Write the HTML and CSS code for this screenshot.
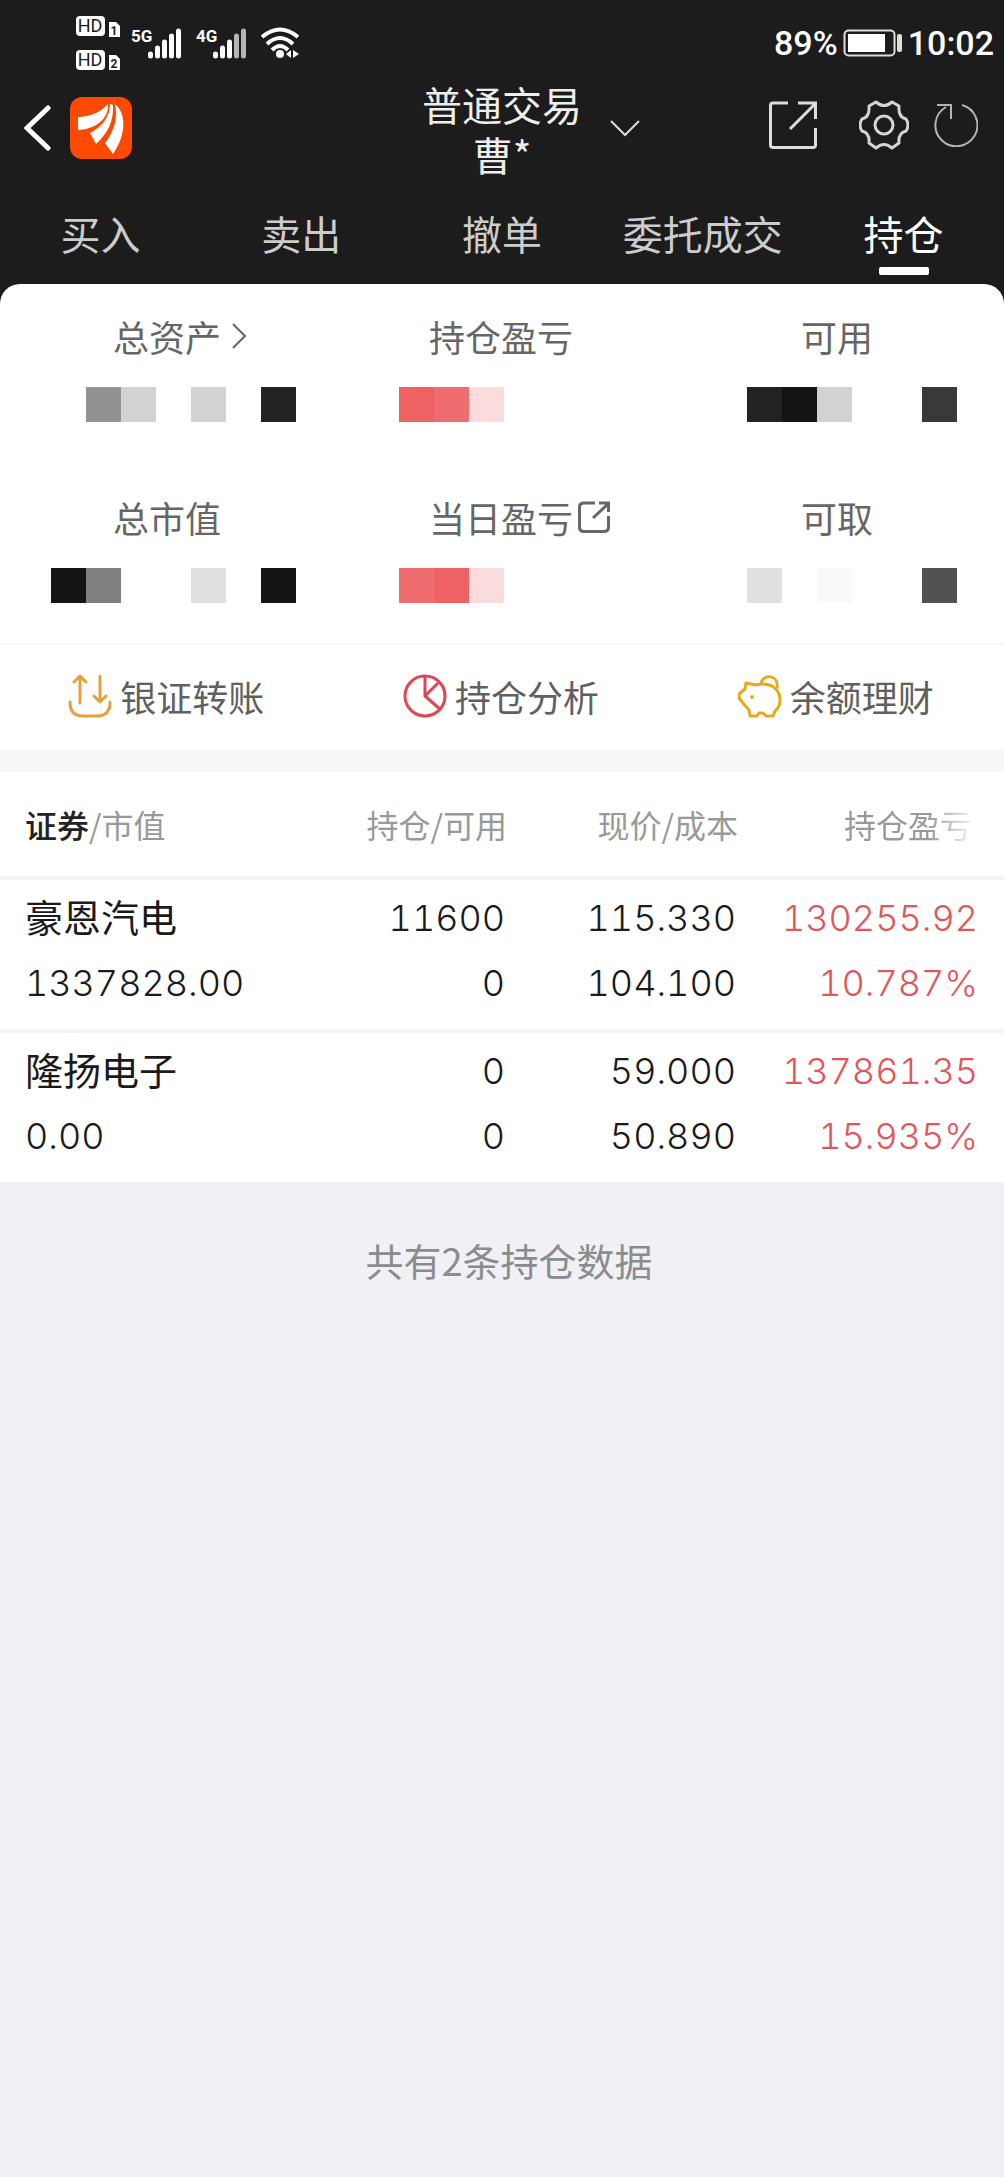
FILE: index.html
```html
<!DOCTYPE html>
<html lang="zh-CN">
<head>
    <meta charset="UTF-8">
    <meta name="viewport" content="width=device-width, initial-scale=1.0">
    <title>普通交易 - 持仓</title>
    <link rel="stylesheet" href="styles.css">
</head>
<body>
    <header class="top">
        <div class="status-bar">
            <div class="status-left">
                <svg class="hd" width="46" height="54" viewBox="0 0 46 54">
                    <rect x="1" y="0" width="29" height="20" rx="4" fill="#fff"/>
                    <text x="15" y="16" class="hd-text">HD</text>
                    <path d="M34 6h7l4 4v11H34z" fill="#fff"/>
                    <text x="39" y="19" class="sim-text">1</text>
                    <rect x="1" y="34" width="29" height="20" rx="4" fill="#fff"/>
                    <text x="15" y="50" class="hd-text">HD</text>
                    <path d="M34 39h7l4 4v11H34z" fill="#fff"/>
                    <text x="39" y="52" class="sim-text">2</text>
                </svg>
                <svg width="51" height="36" viewBox="0 -2 51 36">
                    <text x="0" y="15" class="net-text">5G</text>
                    <path d="M19.500 29v-2M26.500 29V21M33.500 29V15M40.500 29V9M47.500 29V4" stroke="#fff" stroke-width="5" stroke-linecap="round"/>
                </svg>
                <svg width="51" height="36" viewBox="0 -2 51 36">
                    <text x="0" y="15" class="net-text">4G</text>
                    <path d="M19.500 29v-2M26.500 29V21M33.500 29V15" stroke="#fff" stroke-width="5" stroke-linecap="round"/>
                    <path d="M40.500 29V9M47.500 29V4" stroke="#b5b5b5" stroke-width="5" stroke-linecap="round"/>
                </svg>
                <svg width="38" height="32" viewBox="0 0 38 32">
                    <g fill="none" stroke="#fff" stroke-width="4">
                        <path d="M1 10Q19-5 37 10"/>
                        <path d="M6 17Q19 5 32 17"/>
                        <path d="M11 23Q19 15 27 23"/>
                    </g>
                    <circle cx="19" cy="27" r="4" fill="#fff"/>
                    <path d="M30 23v8l-5-4zM32 23l6 4-6 4z" fill="#fff"/>
                </svg>
            </div>
            <div class="status-right">
                <span>89%</span>
                <svg width="60" height="28" viewBox="0 0 60 28">
                    <rect x="1.500" y="1.500" width="50" height="25" rx="4" fill="none" stroke="#ddd" stroke-width="2"/>
                    <rect x="5" y="5" width="37" height="18" fill="#fff"/>
                    <rect x="54" y="5" width="5" height="18" rx="2" fill="#ddd"/>
                </svg>
                <span>10:02</span>
            </div>
        </div>

        <div class="app-bar">
            <div class="app-left">
                <button class="icon-btn" type="button" aria-label="返回">
                    <svg width="27" height="46" viewBox="0 0 27 46"><path d="M24 3L3 23l21 20" fill="none" stroke="#fff" stroke-width="5" stroke-linecap="round"/></svg>
                </button>
                <svg width="62" height="62" viewBox="0 0 62 62">
                    <rect width="62" height="62" rx="12" fill="#fc4a03"/>
                    <path d="M8 20C20 20 31 15 38 7C39 20 28 32 8 33z" fill="#fff"/>
                    <path d="M40 7l3 1C44 25 37 37 26 47L20 36C33 29 40 19 40 7z" fill="#fff"/>
                    <path d="M45 7C56 16 57 37 43 57L35 46C44 35 48 21 45 7z" fill="#fff"/>
                </svg>
            </div>
            <button class="account" type="button">
                <span class="account-name">普通交易<br>曹*</span>
                <svg width="30" height="18" viewBox="0 0 30 18"><path d="M1 1l14 14L29 1" fill="none" stroke="#ddd" stroke-width="2"/></svg>
            </button>
            <div class="app-right">
                <button class="icon-btn share" type="button" aria-label="分享">
                    <svg width="48" height="48" viewBox="0 0 48 48"><path d="M19 2H4Q1.500 2 1.500 4.500V44Q1.500 46.500 4 46.500H44Q46.500 46.500 46.500 44V27M29 2H46.500V18M46 3L21 28" fill="none" stroke="#ddd" stroke-width="3"/></svg>
                </button>
                <button class="icon-btn" type="button" aria-label="设置">
                    <svg width="50" height="50" viewBox="0 0 50 50">
                        <g fill="none" stroke="#d4d4d4" stroke-width="3">
                            <path d="M17 2Q25 9 33 2L40 6Q39 17 47 19Q51 25 47 31Q39 33 40 43L33 48Q25 41 17 48L10 43Q11 33 3 31Q-1 25 3 19Q11 17 10 6Z" stroke-linejoin="round"/>
                            <circle cx="25" cy="25" r="9"/>
                        </g>
                    </svg>
                </button>
                <button class="icon-btn" type="button" aria-label="刷新">
                    <svg width="44" height="44" viewBox="0 0 44 44"><path d="M28 2A21 21 0 1 1 12 4M3 2H17V16" fill="none" stroke="#b4b4b4" stroke-width="2"/></svg>
                </button>
            </div>
        </div>

        <nav class="tabs">
            <a href="#buy">买入</a>
            <a href="#sell">卖出</a>
            <a href="#cancel">撤单</a>
            <a href="#orders">委托成交</a>
            <a href="#holdings" class="active" aria-current="page">持仓</a>
        </nav>
    </header>

    <main>
        <div class="sheet-wrap">
            <section class="summary">
                <div class="item">
                    <a href="#assets" class="item-label">总资产<svg width="16" height="26" viewBox="0 0 16 26"><path d="M2 1l12 12L2 25" fill="none" stroke="#666" stroke-width="2"/></svg></a>
                    <div class="mosaic"><i></i><i class="g5"></i><i class="g7"></i><i></i><i class="g7"></i><i></i><i class="g1"></i></div>
                </div>
                <div class="item mid">
                    <span class="item-label">持仓盈亏</span>
                    <div class="mosaic"><i class="r1"></i><i class="r2"></i><i class="r3"></i></div>
                </div>
                <div class="item last">
                    <span class="item-label">可用</span>
                    <div class="mosaic"><i class="g1"></i><i class="g0"></i><i class="g7"></i><i></i><i></i><i class="g2"></i></div>
                </div>
                <div class="item">
                    <span class="item-label">总市值</span>
                    <div class="mosaic"><i class="g0"></i><i class="g4"></i><i></i><i></i><i class="g8"></i><i></i><i class="g0"></i></div>
                </div>
                <div class="item mid">
                    <a href="#today" class="item-label today">当日盈亏<svg width="32" height="32" viewBox="0 0 32 32"><path d="M17 2H6Q1.500 2 1.500 6V26Q1.500 30.500 6 30.500H26Q30.500 30.500 30.500 26V15M21 2H30.500V11M30 3L15 17" fill="none" stroke="#666" stroke-width="3"/></svg></a>
                    <div class="mosaic"><i class="r2"></i><i class="r1"></i><i class="r3"></i></div>
                </div>
                <div class="item last">
                    <span class="item-label">可取</span>
                    <div class="mosaic"><i class="g8"></i><i></i><i class="g9"></i><i></i><i></i><i class="g3"></i></div>
                </div>
            </section>
        </div>

        <div class="actions">
            <button type="button">
                <svg width="44" height="44" viewBox="0 0 44 44"><g fill="none" stroke="#e5a03c" stroke-width="3" stroke-linecap="round" stroke-linejoin="round"><path d="M12 29V3M6 8l6-6 6 6M32 2v26M26 22l6 6 6-6"/><path d="M2 28Q2 42 15 42H29Q42 42 42 28"/></g></svg>
                银证转账
            </button>
            <button type="button">
                <svg width="44" height="44" viewBox="0 0 44 44"><g fill="none" stroke="#dd4652" stroke-width="3"><circle cx="22" cy="22" r="20"/><path d="M22 2V22L38 36M22 22L35 9"/></g></svg>
                持仓分析
            </button>
            <button type="button">
                <svg width="44" height="44" viewBox="0 0 44 44"><g fill="none" stroke="#e6a91c" stroke-width="3" stroke-linejoin="round"><path d="M8 9L18 11C32 7 42 15 42 26Q42 33 37 37L35 42H28L25 39H21L19 42H12L11 36L5 29L1 24V20L7 15Z"/><path d="M23 9C26-1 41 1 39 14"/></g><circle cx="14" cy="23" r="2" fill="#e6a91c"/></svg>
                余额理财
            </button>
        </div>

        <table class="holdings">
            <thead>
                <tr>
                    <th class="c1"><b>证券</b>/市值</th>
                    <th class="c2">持仓/可用</th>
                    <th class="c3">现价/成本</th>
                    <th class="c4"><span class="fade">持仓盈亏</span></th>
                </tr>
            </thead>
            <tbody>
                <tr>
                    <td><span class="name">豪恩汽电</span>1337828.00</td>
                    <td>11600<br>0</td>
                    <td>115.330<br>104.100</td>
                    <td class="up">130255.92<br>10.787%</td>
                </tr>
                <tr>
                    <td><span class="name">隆扬电子</span>0.00</td>
                    <td>0<br>0</td>
                    <td>59.000<br>50.890</td>
                    <td class="up">137861.35<br>15.935%</td>
                </tr>
            </tbody>
        </table>

        <p class="total">共有2条持仓数据</p>
    </main>
</body>
</html>
```
FILE: styles.css
```css
* {
    box-sizing: border-box;
}
body {
    font-family: "Noto Sans CJK SC", sans-serif;
    background-color: #f0f0f5;
    color: #1a1a1a;
    margin: 0;
}
a {
    color: inherit;
    text-decoration: none;
}
button {
    padding: 0;
    border: none;
    background: none;
    font-family: inherit;
    color: inherit;
    cursor: pointer;
}
svg {
    display: block;
    flex: none;
}
.top {
    background-color: #1c1c1c;
    color: #fff;
}

/* status bar */
.status-bar {
    display: flex;
    justify-content: space-between;
    align-items: center;
    height: 79px;
    padding: 7px 10px 0 75px;
}
.status-left {
    display: flex;
    align-items: center;
    gap: 14px;
}
.hd {
    margin-right: -4px;
}
.hd-text {
    font: 400 18px Roboto, sans-serif;
    fill: #1c1c1c;
    text-anchor: middle;
}
.sim-text {
    font: 700 12px Roboto, sans-serif;
    fill: #1c1c1c;
    text-anchor: middle;
}
.net-text {
    font: 700 17px "Liberation Sans Narrow", Roboto, sans-serif;
    fill: #fff;
}
.status-right {
    display: flex;
    align-items: center;
    gap: 5px;
    font-family: Roboto, sans-serif;
    font-size: 34px;
    font-weight: 500;
    line-height: 40px;
}

/* app bar */
.app-bar {
    display: grid;
    grid-template-columns: 1fr auto 1fr;
    align-items: start;
    padding-bottom: 3px;
}
.app-left,
.app-right {
    display: flex;
    align-items: center;
}
.app-left {
    gap: 19px;
    padding: 18px 0 0 24px;
}
.app-right {
    justify-content: flex-end;
    gap: 25px;
    padding: 21px 26px 0 0;
}
.share {
    margin-right: 17px;
}
.account {
    display: grid;
    grid-template-columns: 30px auto 30px;
    align-items: center;
    gap: 28px;
}
.account-name {
    grid-column: 2;
    font-size: 40px;
    line-height: 50px;
    color: #eee;
}

/* tabs */
.tabs {
    display: grid;
    grid-template-columns: repeat(5, 1fr);
}
.tabs a {
    padding: 21px 0 9px;
    font-size: 40px;
    line-height: 60px;
    text-align: center;
    color: #ccc;
}
.tabs a::after {
    content: "";
    display: block;
    width: 50px;
    height: 8px;
    margin: 4px auto 0;
    border-radius: 2px;
}
.tabs .active {
    color: #fff;
}
.tabs .active::after {
    background-color: #fff;
}

/* account summary */
.sheet-wrap {
    background-color: #1c1c1c;
}
.summary {
    display: grid;
    grid-template-columns: 348fr 348fr 257fr;
    row-gap: 70px;
    padding: 27px 0 40px 51px;
    border-bottom: 2px solid #f7f7f8;
    border-radius: 20px 20px 0 0;
    background-color: #fff;
}
.item-label {
    display: flex;
    align-items: center;
    gap: 10px;
    margin-bottom: 26px;
    padding-left: 62px;
    font-size: 36px;
    line-height: 50px;
    color: #666;
}
.mid .item-label {
    padding-left: 30px;
}
.last .item-label {
    padding-left: 54px;
}
.mid .today {
    gap: 5px;
}
/* hidden amounts */
.mosaic {
    display: flex;
}
.mosaic i {
    width: 35px;
    height: 35px;
}
.g0 { background-color: #141414; }
.g1 { background-color: #232323; }
.g2 { background-color: #393939; }
.g3 { background-color: #525252; }
.g4 { background-color: #808080; }
.g5 { background-color: #929292; }
.g7 { background-color: #d2d2d2; }
.g8 { background-color: #e0e0e0; }
.g9 { background-color: #f9f9f9; }
.r1 { background-color: #ef6264; }
.r2 { background-color: #f06d6f; }
.r3 { background-color: #fbdcdc; }

/* shortcuts */
.actions {
    display: grid;
    grid-template-columns: repeat(3, 1fr);
    border-bottom: 22px solid #f6f6f6;
    background-color: #fff;
}
.actions button {
    display: flex;
    justify-content: center;
    align-items: center;
    gap: 8px;
    height: 105px;
    padding: 0 2px 4px 0;
    font-size: 36px;
    color: #606060;
}

/* holdings */
.holdings {
    width: 100%;
    table-layout: fixed;
    border-spacing: 0;
    background-color: #fff;
}
.c1 { width: 27%; }
.c2 { width: 25%; }
.c3 { width: 23%; }
.c4 { width: 25%; }
.holdings th,
.holdings td {
    padding: 6px 17px 13px 0;
    border-bottom: 4px solid #f3f3f7;
    text-align: right;
    white-space: nowrap;
}
.holdings th {
    padding: 27px 15px 27px 0;
    font-size: 32px;
    font-weight: 400;
    line-height: 50px;
    color: #999;
}
.holdings th b {
    font-weight: 500;
    color: #222;
}
.holdings td {
    font-family: Inter, "Noto Sans CJK SC", sans-serif;
    font-size: 36px;
    font-weight: 300;
    font-variant-numeric: tabular-nums;
    line-height: 65px;
}
.holdings tr > :first-child {
    padding-left: 25px;
    text-align: left;
}
.holdings tr > :last-child {
    padding-right: 26px;
}
.holdings thead tr > :last-child {
    padding-right: 32px;
}
.holdings tbody tr:last-child td {
    border-bottom: none;
}
.name {
    display: block;
    font-size: 38px;
    font-weight: 400;
}
.holdings .up {
    color: #e15658;
}
.fade {
    -webkit-mask-image: linear-gradient(to right, #000 65%, transparent 105%);
    mask-image: linear-gradient(to right, #000 65%, transparent 105%);
}
.total {
    margin: 50px 0;
    padding-left: 14px;
    font-size: 38px;
    line-height: 56px;
    text-align: center;
    color: #8c8c90;
}
```
